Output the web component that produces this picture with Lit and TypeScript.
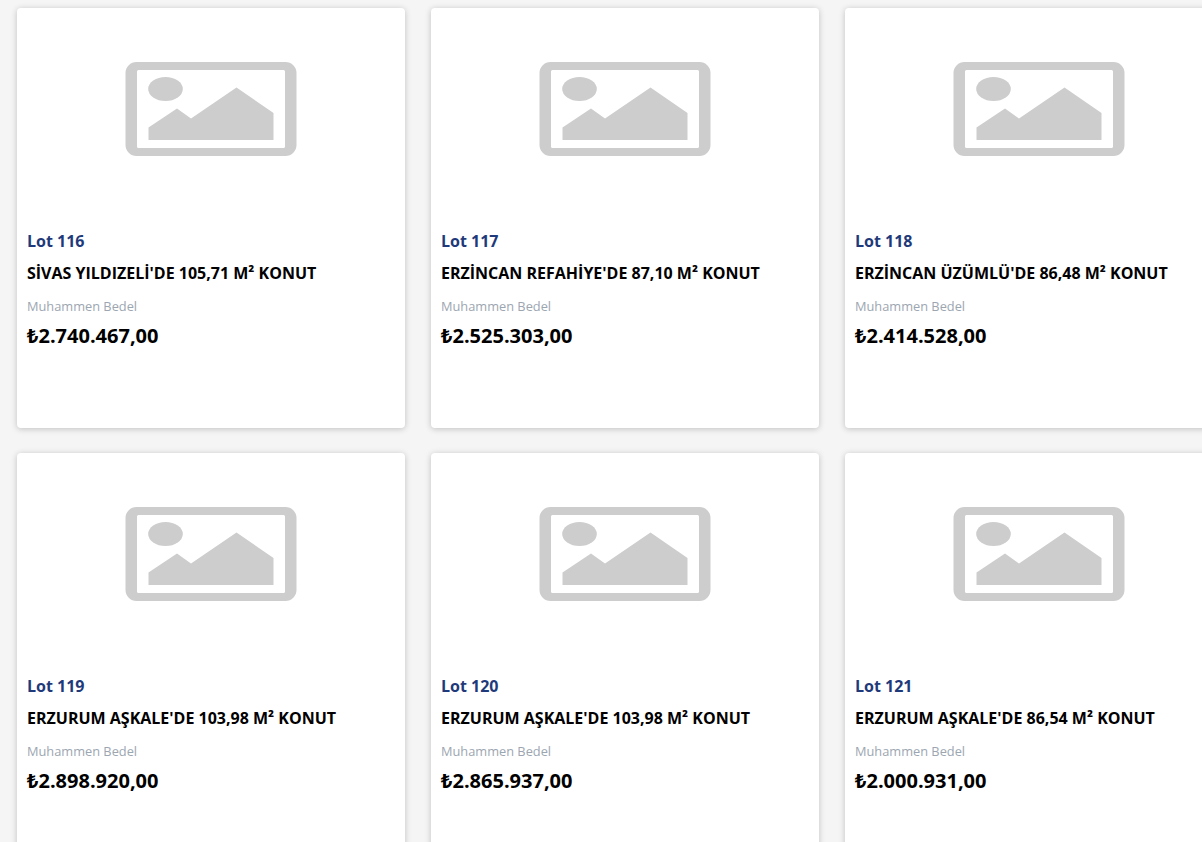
import { LitElement, html, css, svg } from "lit";
import { customElement } from "lit/decorators.js";

const LOTS = [
  ["Lot 116", "SİVAS YILDIZELİ'DE 105,71 M² KONUT", "₺2.740.467,00"],
  ["Lot 117", "ERZİNCAN REFAHİYE'DE 87,10 M² KONUT", "₺2.525.303,00"],
  ["Lot 118", "ERZİNCAN ÜZÜMLÜ'DE 86,48 M² KONUT", "₺2.414.528,00"],
  ["Lot 119", "ERZURUM AŞKALE'DE 103,98 M² KONUT", "₺2.898.920,00"],
  ["Lot 120", "ERZURUM AŞKALE'DE 103,98 M² KONUT", "₺2.865.937,00"],
  ["Lot 121", "ERZURUM AŞKALE'DE 86,54 M² KONUT", "₺2.000.931,00"],
];

const placeholder = svg`<svg class="ph" width="172" height="94" viewBox="-0.500 0 172 94">
  <path fill="#cdcdcd" fill-rule="evenodd" d="M11 0H160A11 11 0 0 1 171 11V83A11 11 0 0 1 160 94H11A11 11 0 0 1 0 83V11A11 11 0 0 1 11 0ZM13 8A1.500 1.500 0 0 0 11.500 9.500V84.500A1.500 1.500 0 0 0 13 86H158A1.500 1.500 0 0 0 159.500 84.500V9.500A1.500 1.500 0 0 0 158 8Z"/>
  <ellipse fill="#cdcdcd" cx="40" cy="27" rx="17.300" ry="12"/>
  <path fill="#cdcdcd" d="M23 65.500L51.500 46.500L65.500 56.500L111 25.500L148 51V78H23Z"/>
</svg>`;

@customElement("app-root")
export class AppRoot extends LitElement {
  static styles = css`
    :host {
      display: block;
      width: 1202px;
      height: 842px;
      overflow: hidden;
      background: #f5f5f5;
      font-family: "Open Sans", "Noto Sans", sans-serif;
    }
    .grid {
      display: grid;
      grid-template-columns: repeat(3, 388px);
      grid-auto-rows: 419.500px;
      column-gap: 26px;
      row-gap: 25.500px;
      padding: 8px 0 0 17px;
    }
    .card {
      background: #fff;
      border-radius: 4px;
      box-shadow: 0 1px 6px rgba(0, 0, 0, 0.22);
      display: flex;
      flex-direction: column;
    }
    .media {
      height: 202px;
      display: flex;
      align-items: center;
      justify-content: center;
    }
    .ph {
      display: block;
      filter: blur(0.5px);
    }
    .body {
      padding: 20px 10px 0;
    }
    .lot {
      font-size: 16px;
      line-height: 22px;
      font-weight: 700;
      color: #1f3a7a;
    }
    .title {
      margin-top: 10px;
      font-size: 16px;
      line-height: 22px;
      font-weight: 700;
      color: #000;
      white-space: nowrap;
    }
    .label {
      margin-top: 13px;
      font-size: 12.800px;
      line-height: 18px;
      color: #9ca6b1;
    }
    .price {
      margin-top: 7px;
      font-size: 20px;
      line-height: 28px;
      font-weight: 700;
      color: #000;
    }
  `;

  render() {
    return html`<div class="grid">
      ${LOTS.map(
        ([lot, title, price]) => html`<article class="card">
          <div class="media">${placeholder}</div>
          <div class="body">
            <div class="lot">${lot}</div>
            <div class="title">${title}</div>
            <div class="label">Muhammen Bedel</div>
            <div class="price">${price}</div>
          </div>
        </article>`
      )}
    </div>`;
  }
}
